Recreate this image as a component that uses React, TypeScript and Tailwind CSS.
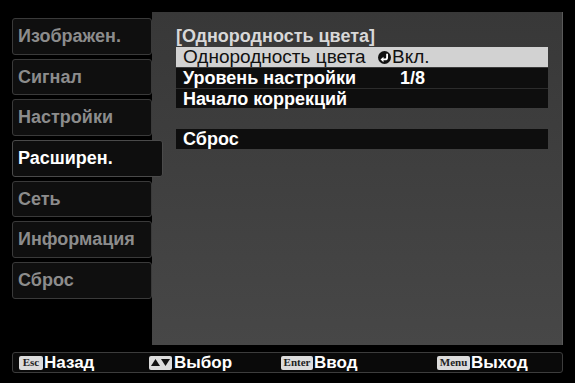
import React from "react";

const tabs = ["Изображен.", "Сигнал", "Настройки", "Расширен.", "Сеть", "Информация", "Сброс"];

function EnterIcon() {
  return (
    <svg width="13" height="13" viewBox="0 0 12 12" className="inline-block">
      <circle cx="6" cy="6" r="6" fill="#111" />
      <path d="M8.4 2.6 V6 Q8.4 7.8 6.6 7.8 H4.4" stroke="#fff" strokeWidth="1.7" fill="none" />
      <path d="M2.3 7.8 L5.1 5.3 L5.1 10.3 Z" fill="#fff" />
    </svg>
  );
}

function Key({ children, w }: { children: React.ReactNode; w: string }) {
  return (
    <span
      className={`${w} h-[14px] bg-[#dcdcdc] text-[#222] rounded-[2px] flex items-center justify-center text-[11px] font-bold leading-none mr-[1px]`}
      style={{ fontFamily: '"Liberation Serif", serif' }}
    >
      {children}
    </span>
  );
}

export default function App() {
  return (
    <div
      className="w-[575px] h-[383px] bg-black relative overflow-hidden"
      style={{ fontFamily: '"Liberation Sans", Arial, sans-serif' }}
    >
      <div className="flex pl-[12px] pt-[12px]">
        <div className="w-[140px] flex flex-col gap-[4px] pt-[6px]">
          {tabs.map((t, i) =>
            i === 3 ? (
              <div
                key={t}
                className="relative z-10 w-[151px] h-[36.7px] bg-[#0e0e0e] border border-[#4a4a4a] rounded-[3px] flex items-center pl-[5px] text-[18px] font-bold text-white"
              >
                {t}
              </div>
            ) : (
              <div
                key={t}
                className="h-[36.7px] bg-[#0f0f0f] border border-[#3a3a3a] rounded-[3px] flex items-center pl-[5px] text-[18px] font-bold text-[#8c8c8c]"
              >
                {t}
              </div>
            )
          )}
        </div>
        <div className="w-[411px] h-[333px] bg-gradient-to-b from-[#383838] to-[#474747] border-r border-[#5a5a5a] pl-[24px] pr-[14px] pt-[14px]">
          <div className="text-[18px] font-bold text-[#d8d8d8] leading-[21px] h-[21px]">[Однородность цвета]</div>
          <div className="flex flex-col">
            <div className="h-[20px] bg-[#d2d2d2] text-[#111] text-[19px] leading-[20px] flex items-center pl-[7px]">
              <span className="w-[195px] whitespace-nowrap">Однородность цвета</span>
              <EnterIcon />
              <span className="ml-[1px]">Вкл.</span>
            </div>
            <div className="h-[20px] bg-[#0e0e0e] text-white text-[18px] font-bold leading-[20px] flex items-center pl-[7px] mt-[1px]">
              <span className="w-[217px] whitespace-nowrap">Уровень настройки</span>
              <span>1/8</span>
            </div>
            <div className="h-[20px] bg-[#0e0e0e] border-t border-[#2c2c2c] text-white text-[18px] font-bold leading-[20px] flex items-center pl-[7px]">
              Начало коррекций
            </div>
            <div className="h-[20px] bg-[#0e0e0e] text-white text-[18px] font-bold leading-[20px] flex items-center pl-[7px] mt-[21px]">
              Сброс
            </div>
          </div>
        </div>
      </div>
      <div className="ml-[12px] mt-[7px] w-[551px] h-[21px] border border-[#3c3c3c] rounded-[3px] bg-[#0a0a0a] flex items-center pl-[6px] text-white text-[17px] font-bold">
        <div className="w-[130px] flex items-center">
          <Key w="w-[24px]">Esc</Key>
          <span>Назад</span>
        </div>
        <div className="w-[132px] flex items-center">
          <span className="w-[23px] h-[14px] bg-[#dcdcdc] rounded-[2px] flex items-center justify-center gap-[1px] mr-[2px]">
            <svg width="9" height="7" viewBox="0 0 9 7"><path d="M0 7 L4.5 0 L9 7 Z" fill="#111" /></svg>
            <svg width="9" height="7" viewBox="0 0 9 7"><path d="M0 0 L4.5 7 L9 0 Z" fill="#111" /></svg>
          </span>
          <span>Выбор</span>
        </div>
        <div className="w-[156px] flex items-center">
          <Key w="w-[32px]">Enter</Key>
          <span>Ввод</span>
        </div>
        <div className="flex items-center">
          <Key w="w-[33px]">Menu</Key>
          <span>Выход</span>
        </div>
      </div>
    </div>
  );
}
